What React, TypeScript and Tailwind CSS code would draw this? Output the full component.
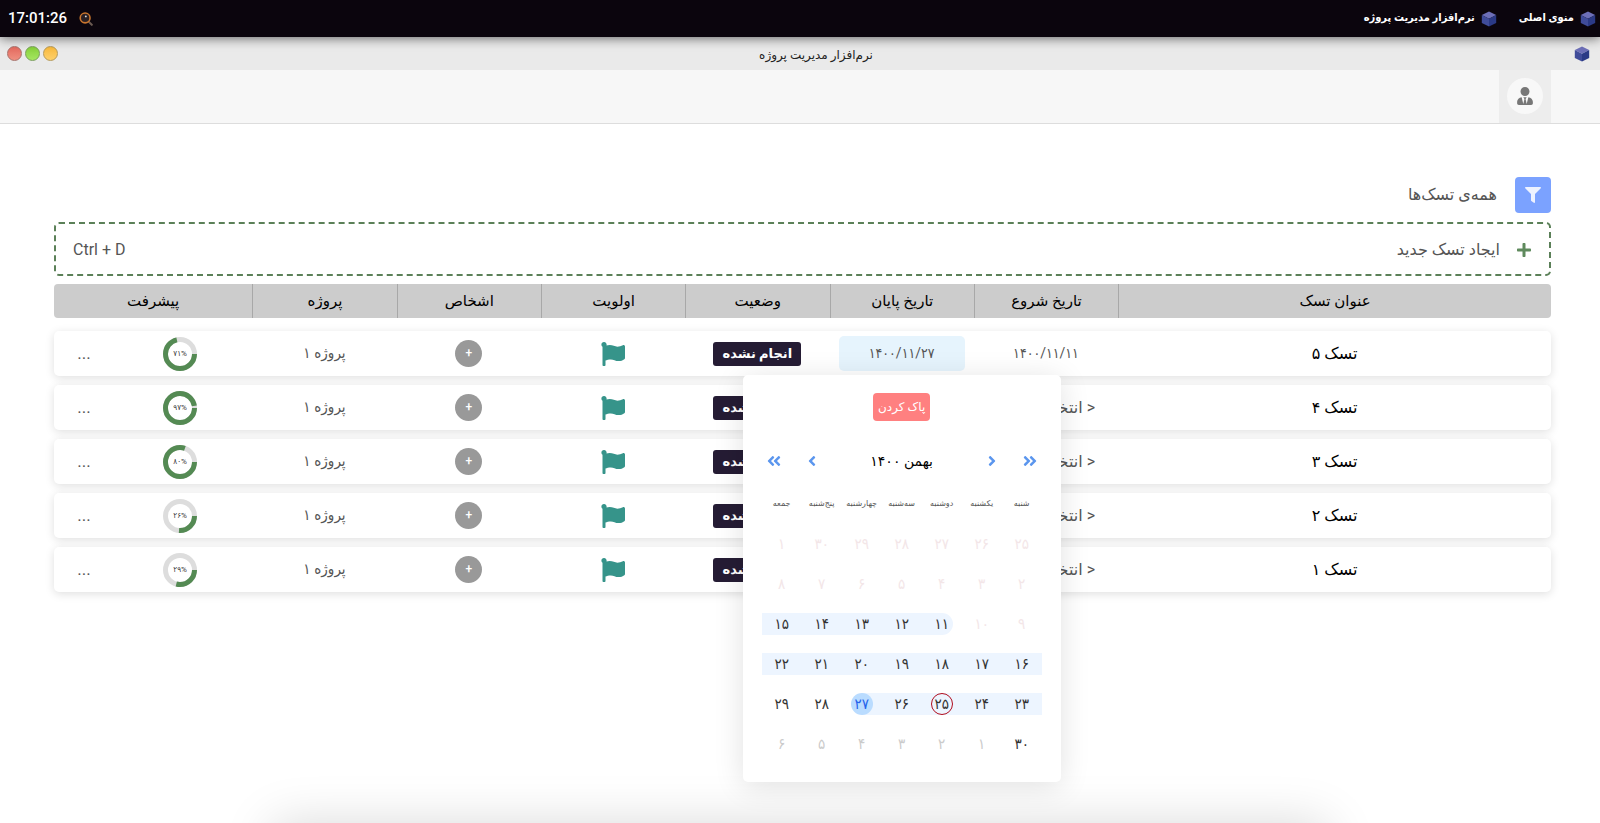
import { useId } from "react";
import { FaAngleDoubleLeft, FaAngleDoubleRight, FaAngleLeft, FaAngleRight, FaFilter, FaFlag, FaPlus, FaUserTie } from "react-icons/fa";

type Task = { title: string; start: string | null; end: string | null; percent: number; label: string };

const tasks: Task[] = [
  { title: "تسک ۵", start: "۱۴۰۰/۱۱/۱۱", end: "۱۴۰۰/۱۱/۲۷", percent: 71, label: "۷۱%" },
  { title: "تسک ۴", start: null, end: null, percent: 97, label: "۹۷%" },
  { title: "تسک ۳", start: null, end: null, percent: 80, label: "۸۰%" },
  { title: "تسک ۲", start: null, end: null, percent: 26, label: "۲۶%" },
  { title: "تسک ۱", start: null, end: null, percent: 29, label: "۲۹%" },
];

const headers = ["عنوان تسک", "تاریخ شروع", "تاریخ پایان", "وضعیت", "اولویت", "اشخاص", "پروژه"];
const weekdays = ["شنبه", "یکشنبه", "دوشنبه", "سه‌شنبه", "چهارشنبه", "پنج‌شنبه", "جمعه"];

type Kind = "disabled" | "outside" | "plain" | "range" | "first" | "last" | "today";
const weeks: [string, Kind][][] = [
  [["۲۵", "disabled"], ["۲۶", "disabled"], ["۲۷", "disabled"], ["۲۸", "disabled"], ["۲۹", "disabled"], ["۳۰", "disabled"], ["۱", "disabled"]],
  [["۲", "disabled"], ["۳", "disabled"], ["۴", "disabled"], ["۵", "disabled"], ["۶", "disabled"], ["۷", "disabled"], ["۸", "disabled"]],
  [["۹", "disabled"], ["۱۰", "disabled"], ["۱۱", "first"], ["۱۲", "range"], ["۱۳", "range"], ["۱۴", "range"], ["۱۵", "range"]],
  [["۱۶", "range"], ["۱۷", "range"], ["۱۸", "range"], ["۱۹", "range"], ["۲۰", "range"], ["۲۱", "range"], ["۲۲", "range"]],
  [["۲۳", "range"], ["۲۴", "range"], ["۲۵", "today"], ["۲۶", "range"], ["۲۷", "last"], ["۲۸", "plain"], ["۲۹", "plain"]],
  [["۳۰", "plain"], ["۱", "outside"], ["۲", "outside"], ["۳", "outside"], ["۴", "outside"], ["۵", "outside"], ["۶", "outside"]],
];

const dayText: Record<Kind, string> = {
  disabled: "text-[#f3e6e8]",
  outside: "text-[#cbcbcb]",
  plain: "text-[#333333]",
  range: "text-[#333333]",
  first: "text-[#333333]",
  last: "text-[#2563eb] bg-[#badcff]",
  today: "text-[#333333] border border-[#b00d1e]",
};

const dayBand: Record<Kind, string> = {
  disabled: "",
  outside: "",
  plain: "",
  range: "bg-[#edf5ff]",
  first: "bg-[#edf5ff] rounded-r-full mr-[9px] pl-[9px]",
  last: "bg-[linear-gradient(to_left,#edf5ff_50%,transparent_50%)]",
  today: "bg-[#edf5ff]",
};

const rowGrid = "grid grid-cols-[3fr_1fr_1fr_1fr_1fr_1fr_1fr_1fr_54px]";

function Cube({ className }: { className: string }) {
  return (
    <svg viewBox="0 0 16 16" className={className} aria-hidden="true">
      <path d="M8 .6 15.2 4 8 7.8.8 4Z" fill="#6d6fb8" />
      <path d="M.8 4 8 7.8v7.8L.8 12Z" fill="#404c9a" />
      <path d="M15.2 4 8 7.8v7.8l7.2-3.6Z" fill="#2b3a86" />
    </svg>
  );
}

function SearchGlass() {
  return (
    <svg viewBox="0 0 16 16" className="size-[14px]" aria-hidden="true">
      <path d="m11 11 3.6 3.6" stroke="#6b5a52" strokeWidth="2.4" strokeLinecap="round" />
      <circle cx="7" cy="6.8" r="5.6" fill="#2a2023" stroke="#c9752d" strokeWidth="1.8" />
      <circle cx="7.8" cy="5" r="1.1" fill="#d8d8d8" />
    </svg>
  );
}

function Ring({ percent, label }: { percent: number; label: string }) {
  const length = 2 * Math.PI * 14.5;
  return (
    <div className="relative size-[34px]">
      <svg viewBox="0 0 34 34" className="size-full" aria-hidden="true">
        <circle cx="17" cy="17" r="14.5" fill="none" stroke="#dddddd" strokeWidth="5" />
        <circle cx="17" cy="17" r="14.5" fill="none" stroke="#548a53" strokeWidth="5" strokeDasharray={`${(length * percent) / 100} ${length}`} />
      </svg>
      <span dir="ltr" className="absolute inset-0 flex items-center justify-center text-[8px] leading-none text-[#333333]">{label}</span>
    </div>
  );
}

function Calendar() {
  return (
    <div role="dialog" aria-label="تقویم" className="absolute top-full left-1/2 z-10 mt-1 flex w-[318px] -translate-x-1/2 flex-col items-center rounded-[5px] bg-white px-[19px] py-[18px] font-[Roboto,'DejaVu_Sans',sans-serif] shadow-[0_4px_30px_rgba(0,0,0,0.12)]">
      <button type="button" className="h-7 w-[57px] rounded-[4px] bg-[#ff8080] text-[12px] whitespace-nowrap text-white">پاک کردن</button>
      <div className="mt-[22px] flex h-9 w-full items-center px-[2px] text-[#5b96ee]">
        <button type="button" aria-label="سال قبل" className="flex w-5 justify-center"><FaAngleDoubleRight className="size-4" /></button>
        <button type="button" aria-label="ماه قبل" className="mr-[18px] flex w-5 justify-center"><FaAngleRight className="size-4" /></button>
        <span className="grow text-center text-[14px] text-black">بهمن ۱۴۰۰</span>
        <button type="button" aria-label="ماه بعد" className="ml-[18px] flex w-5 justify-center"><FaAngleLeft className="size-4" /></button>
        <button type="button" aria-label="سال بعد" className="flex w-5 justify-center"><FaAngleDoubleLeft className="size-4" /></button>
      </div>
      <table className="mt-[5px] block w-full">
        <thead className="block">
          <tr className="grid h-10 grid-cols-7 items-center">
            {weekdays.map((d) => (
              <th key={d} className="text-center text-[8px] font-normal whitespace-nowrap text-[#555555]">{d}</th>
            ))}
          </tr>
        </thead>
        <tbody className="block">
          {weeks.map((week, i) => (
            <tr key={i} className="grid h-10 grid-cols-7 items-center">
              {week.map(([day, kind]) => (
                <td key={day} className={`flex justify-center ${dayBand[kind]}`}>
                  <button type="button" className={`flex size-[22px] items-center justify-center rounded-full font-[Roboto,'DejaVu_Sans_Condensed','DejaVu_Sans',sans-serif] text-[15px] leading-none ${dayText[kind]}`}>{day}</button>
                </td>
              ))}
            </tr>
          ))}
        </tbody>
      </table>
    </div>
  );
}

function TaskRow({ task }: { task: Task }) {
  return (
    <tr className={`${rowGrid} h-[45px] items-center rounded-[5px] bg-white text-center font-[Roboto,'DejaVu_Sans_Condensed','DejaVu_Sans',sans-serif] text-[15px] text-[#555555] shadow-[0_2px_10px_rgba(0,0,0,0.13)]`}>
      <td className="font-[Roboto,'DejaVu_Sans',sans-serif] text-[16px] text-black">{task.title}</td>
      {task.start ? (
        <td dir="ltr" className="text-[14px] whitespace-nowrap">{task.start}</td>
      ) : (
        <td className="font-[Roboto,'DejaVu_Sans',sans-serif] text-[16px] whitespace-nowrap">{"< انتخاب کنید >"}</td>
      )}
      <td className="relative px-[9px]">
        {task.end && (
          <>
            <button type="button" dir="ltr" className="h-[35px] w-full rounded-[5px] bg-[#e6f4fd] text-[14px]">{task.end}</button>
            <Calendar />
          </>
        )}
      </td>
      <td className="flex justify-center">
        <span className="flex h-6 w-[88px] items-center justify-center rounded-[3px] bg-[#251c34] font-[Roboto,'DejaVu_Sans',sans-serif] text-[13px] font-bold whitespace-nowrap text-white">انجام نشده</span>
      </td>
      <td className="flex justify-center"><FaFlag className="size-6 text-[#36948a]" /></td>
      <td className="flex justify-center">
        <button type="button" aria-label="افزودن شخص" className="flex size-[27px] items-center justify-center rounded-full bg-[#999999] pb-[2px] text-[12px] leading-none font-medium text-white">+</button>
      </td>
      <td>پروژه ۱</td>
      <td className="flex justify-center"><Ring percent={task.percent} label={task.label} /></td>
      <td className="pl-[6px]"><button type="button" aria-label="گزینه‌ها" className="text-[17px]">...</button></td>
    </tr>
  );
}

export default function App() {
  const titleId = useId();
  return (
    <div dir="rtl" className="relative flex min-h-screen flex-col overflow-hidden bg-white font-[Roboto,'DejaVu_Sans',sans-serif]">
      <header className="relative z-10 flex h-[37px] shrink-0 items-center justify-between bg-[#0b050d] px-1 text-white shadow-[0_1px_12px_rgba(0,0,0,0.6)]">
        <nav className="flex items-center gap-[22px] font-[Roboto,'DejaVu_Sans_Condensed','DejaVu_Sans',sans-serif] text-[11px] font-bold">
          <a href="#menu" className="flex items-center gap-[6px]"><Cube className="size-4" />منوی اصلی</a>
          <a href="#projects" className="flex items-center gap-[6px]"><Cube className="size-4" />نرم‌افزار مدیریت پروژه</a>
        </nav>
        <div className="flex items-center gap-3 pl-1">
          <button type="button" aria-label="جستجو"><SearchGlass /></button>
          <time className="text-[15px] font-medium">17:01:26</time>
        </div>
      </header>

      <div className="flex h-[33px] shrink-0 items-center justify-between bg-[#eaeaea] pr-[10px] pl-[7px]">
        <Cube className="size-4" />
        <h1 id={titleId} className="pt-[3px] text-[12px] text-[#222222]">نرم‌افزار مدیریت پروژه</h1>
        <div className="flex gap-[3px]">
          <button type="button" aria-label="کوچک کردن" className="size-[15px] rounded-full border border-[#b79a58] bg-linear-to-b from-[#f9b93a] to-[#fdd06a]" />
          <button type="button" aria-label="بزرگ کردن" className="size-[15px] rounded-full border border-[#7aa05a] bg-linear-to-b from-[#86d038] to-[#a5e660]" />
          <button type="button" aria-label="بستن" className="size-[15px] rounded-full border border-[#a9716a] bg-linear-to-b from-[#e4695e] to-[#ef8f80]" />
        </div>
      </div>

      <div className="flex h-[54px] shrink-0 border-b border-[#dddddd] bg-[#f7f7f7] pr-[49px]">
        <button type="button" aria-label="حساب کاربری" className="flex w-[52px] items-center justify-center bg-[#ededed] pb-[2px]">
          <span className="flex size-9 items-center justify-center rounded-full bg-[#f8f8f8]"><FaUserTie className="size-[18px] text-[#777777]" /></span>
        </button>
      </div>

      <main aria-labelledby={titleId} className="flex flex-col pt-[53px] pr-[49px] pl-[54px]">
        <div className="flex items-center gap-[18px]">
          <button type="button" aria-label="فیلتر" className="flex size-9 items-center justify-center rounded-[4px] bg-[#7ba2ff] text-[#edf2ff]"><FaFilter className="size-4" /></button>
          <h2 className="text-[16px] text-[#555555]">همه‌ی تسک‌ها</h2>
        </div>
        <button type="button" className="mt-[9px] flex h-[54px] items-center rounded-[5px] border-2 border-dashed border-[#5b8058] px-[17px] pt-[2px] text-[16px] text-[#555555]">
          <FaPlus className="size-4 text-[#5f8a5d]" />
          <span className="mr-4">ایجاد تسک جدید</span>
          <span dir="ltr" className="mr-auto">Ctrl + D</span>
        </button>
        <table className="mt-2 block">
          <thead className="block">
            <tr className={`${rowGrid} h-[34px] overflow-hidden rounded-[4px] bg-[#cccccc] text-[15px] text-black`}>
              {headers.map((h) => (
                <th key={h} className="flex items-center justify-center border-l border-[#a8a8a8] font-normal">{h}</th>
              ))}
              <th colSpan={2} className="col-span-2 flex items-center justify-center font-normal">پیشرفت</th>
            </tr>
          </thead>
          <tbody className="flex flex-col gap-[9px] pt-[13px]">
            {tasks.map((t) => <TaskRow key={t.title} task={t} />)}
          </tbody>
        </table>
      </main>
      <div className="absolute top-full right-[17%] left-[17%] h-16 rounded-lg bg-white shadow-[0_0_50px_rgba(0,0,0,0.15)]" />
    </div>
  );
}
